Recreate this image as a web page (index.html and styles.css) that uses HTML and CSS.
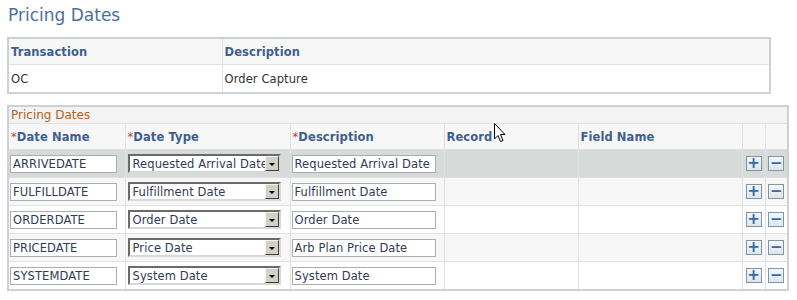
FILE: index.html
```html
<!DOCTYPE html>
<html>
<head>
<meta charset="utf-8">
<link rel="stylesheet" href="styles.css">
</head>
<body>
<div class="page">
  <h1 class="title">Pricing Dates</h1>

  <table class="grid grid-top">
    <colgroup><col class="c-trans"><col></colgroup>
    <tr class="hdr"><th>Transaction</th><th>Description</th></tr>
    <tr class="row"><td>OC</td><td>Order Capture</td></tr>
  </table>

  <div class="grid-wrap">
    <table class="grid grid-main">
      <colgroup>
        <col class="c1"><col class="c2"><col class="c3"><col class="c4"><col class="c5"><col class="c6"><col class="c7">
      </colgroup>
      <tr class="cap"><td colspan="7">Pricing Dates</td></tr>
      <tr class="hdr">
        <th><span class="req">*</span>Date Name</th>
        <th><span class="req">*</span>Date Type</th>
        <th><span class="req">*</span>Description</th>
        <th>Record</th>
        <th>Field Name</th>
        <th></th>
        <th></th>
      </tr>
      <tr class="row sel">
        <td><span class="inp w1">ARRIVEDATE</span></td>
        <td><span class="dd"><span class="dd-txt">Requested Arrival Date</span><span class="dd-btn"></span></span></td>
        <td><span class="inp w3">Requested Arrival Date</span></td>
        <td></td><td></td>
        <td class="bc"><span class="btn plus">+</span></td>
        <td class="bc"><span class="btn minus">−</span></td>
      </tr>
      <tr class="row alt">
        <td><span class="inp w1">FULFILLDATE</span></td>
        <td><span class="dd"><span class="dd-txt">Fulfillment Date</span><span class="dd-btn"></span></span></td>
        <td><span class="inp w3">Fulfillment Date</span></td>
        <td></td><td></td>
        <td class="bc"><span class="btn plus">+</span></td>
        <td class="bc"><span class="btn minus">−</span></td>
      </tr>
      <tr class="row">
        <td><span class="inp w1">ORDERDATE</span></td>
        <td><span class="dd"><span class="dd-txt">Order Date</span><span class="dd-btn"></span></span></td>
        <td><span class="inp w3">Order Date</span></td>
        <td></td><td></td>
        <td class="bc"><span class="btn plus">+</span></td>
        <td class="bc"><span class="btn minus">−</span></td>
      </tr>
      <tr class="row alt">
        <td><span class="inp w1">PRICEDATE</span></td>
        <td><span class="dd"><span class="dd-txt">Price Date</span><span class="dd-btn"></span></span></td>
        <td><span class="inp w3">Arb Plan Price Date</span></td>
        <td></td><td></td>
        <td class="bc"><span class="btn plus">+</span></td>
        <td class="bc"><span class="btn minus">−</span></td>
      </tr>
      <tr class="row">
        <td><span class="inp w1">SYSTEMDATE</span></td>
        <td><span class="dd"><span class="dd-txt">System Date</span><span class="dd-btn"></span></span></td>
        <td><span class="inp w3">System Date</span></td>
        <td></td><td></td>
        <td class="bc"><span class="btn plus">+</span></td>
        <td class="bc"><span class="btn minus">−</span></td>
      </tr>
    </table>
    <svg class="cursor" width="12" height="20" viewBox="0 0 12 20">
      <path d="M0.5 0.5 L0.5 16 L4 12.5 L6.5 18.5 L9 17.5 L6.5 11.5 L11 11.5 Z" fill="#fff" stroke="#000" stroke-width="1"/>
    </svg>
  </div>
</div>
</body>
</html>
```

FILE: styles.css
```css
html, body {
  margin: 0;
  padding: 0;
  background: #ffffff;
}
body {
  font-family: "DejaVu Sans", Verdana, sans-serif;
  font-size: 11.5px;
  letter-spacing: 0.1px;
  color: #333333;
}
.page {
  padding: 4px 0 0 7px;
}
.title {
  margin: 0 0 11px 1px;
  font-weight: normal;
  font-size: 17px;
  letter-spacing: 0;
  line-height: 22px;
  color: #4d6f9e;
}
.grid {
  border-collapse: collapse;
  table-layout: fixed;
}
.grid th, .grid td {
  padding: 0 0 0 2px;
  border: 1px solid #e1e1e1;
  text-align: left;
  vertical-align: middle;
  white-space: nowrap;
  overflow: hidden;
}
.grid th {
  font-weight: bold;
  color: #3d5f8f;
}
.grid-top {
  width: 764px;
  border: 2px solid #cdd1d5;
}
.grid-top .c-trans { width: 214px; }
.grid-top .hdr th {
  height: 25px;
  background: #f7f7f7;
}
.grid-top .row td {
  height: 27px;
  background: #ffffff;
  color: #333333;
}
.grid-wrap {
  position: relative;
  margin-top: 11px;
  width: 782px;
}
.grid-main {
  width: 782px;
  border: 2px solid #cdd1d5;
}
.grid-main .c1 { width: 117px; }
.grid-main .c2 { width: 165px; }
.grid-main .c3 { width: 154px; }
.grid-main .c4 { width: 134px; }
.grid-main .c5 { width: 164px; }
.grid-main .c6 { width: 23px; }
.grid-main .c7 { width: 23px; }
.grid-main .cap td {
  height: 16px;
  background: #f1f3f4;
  color: #b4621c;
  font-size: 12px;
  letter-spacing: 0;
  padding-left: 2px;
  border-bottom: 1px solid #e1e1e1;
}
.grid-main .hdr th {
  height: 25px;
  background: #f7f7f7;
}
.req {
  color: #c8402a;
  font-weight: normal;
}
.grid-main .row td {
  height: 27px;
  background: #ffffff;
  padding-left: 1px;
}
.grid-main .row.alt td { background: #f7f7f7; }
.grid-main .row.sel td { background: #d6dbd9; }
.inp {
  display: inline-block;
  box-sizing: border-box;
  height: 18px;
  line-height: 16px;
  padding: 0 2px;
  border: 1px solid #a9aeb2;
  background: #ffffff;
  color: #333a55;
  overflow: hidden;
  vertical-align: middle;
}
.w1 { width: 107px; }
.w3 { width: 144px; }
.dd {
  display: inline-flex;
  box-sizing: border-box;
  width: 153px;
  height: 19px;
  margin-left: 1px;
  border: 2px solid #6a6a6a;
  border-right-color: #d8d8d8;
  border-bottom-color: #d8d8d8;
  background: #ffffff;
  vertical-align: middle;
}
.dd-txt {
  flex: 1;
  min-width: 0;
  overflow: hidden;
  padding: 1px 0 0 3px;
  line-height: 14px;
  color: #333a55;
}
.dd-btn {
  position: relative;
  flex: 0 0 14px;
  box-sizing: border-box;
  border: 1px solid #404040;
  border-top-color: #f4f4f4;
  border-left-color: #f4f4f4;
  background: #d4d0c8;
}
.dd-btn::after {
  content: "";
  position: absolute;
  left: 3px;
  top: 6px;
  border-left: 3px solid transparent;
  border-right: 3px solid transparent;
  border-top: 3px solid #000000;
}
.grid-main .row td.bc {
  padding: 0;
  text-align: center;
}
.btn {
  display: inline-block;
  box-sizing: border-box;
  width: 16px;
  height: 15px;
  border: 1px solid #7f95a6;
  background: linear-gradient(#f4f7f8, #dfe6ea);
  color: #2f6bb0;
  font-weight: bold;
  font-size: 15px;
  letter-spacing: 0;
  line-height: 12px;
  text-align: center;
  vertical-align: middle;
}
.cursor {
  position: absolute;
  left: 487px;
  top: 18px;
}
```
